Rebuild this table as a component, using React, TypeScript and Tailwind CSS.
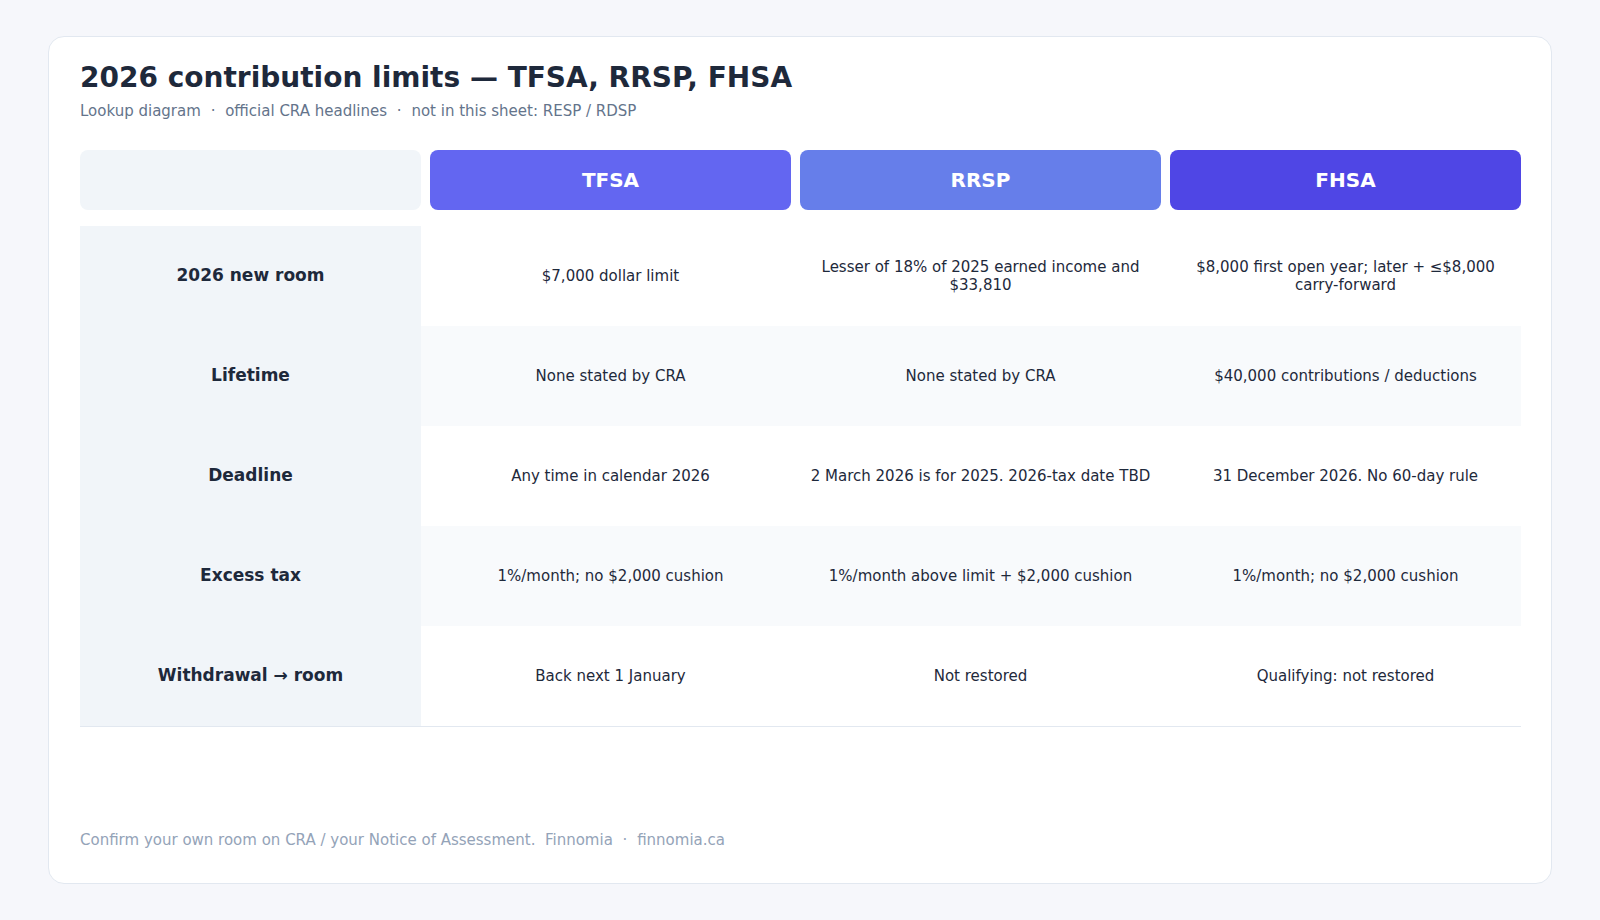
import React from "react";

const rows: { label: string; cells: string[] }[] = [
  {
    label: "2026 new room",
    cells: [
      "$7,000 dollar limit",
      "Lesser of 18% of 2025 earned income and $33,810",
      "$8,000 first open year; later + ≤$8,000 carry-forward",
    ],
  },
  {
    label: "Lifetime",
    cells: ["None stated by CRA", "None stated by CRA", "$40,000 contributions / deductions"],
  },
  {
    label: "Deadline",
    cells: [
      "Any time in calendar 2026",
      "2 March 2026 is for 2025. 2026-tax date TBD",
      "31 December 2026. No 60-day rule",
    ],
  },
  {
    label: "Excess tax",
    cells: [
      "1%/month; no $2,000 cushion",
      "1%/month above limit + $2,000 cushion",
      "1%/month; no $2,000 cushion",
    ],
  },
  {
    label: "Withdrawal → room",
    cells: ["Back next 1 January", "Not restored", "Qualifying: not restored"],
  },
];

const Dot = () => <span className="px-[5px]">·</span>;

export default function App() {
  return (
    <div className="w-[1600px] h-[920px] bg-[#f6f7fb] px-12 py-9 font-['DejaVu_Sans',sans-serif]">
      <div className="h-[848px] w-[1504px] bg-white border border-[#e2e8f0] rounded-2xl pl-[31px] pr-8 pt-[23px] pb-8 flex flex-col">
        <h1 className="text-[28px] leading-[36px] font-bold text-[#1e293b]">
          2026 contribution limits — TFSA, RRSP, FHSA
        </h1>
        <p className="mt-1 text-[15px] leading-[22px] text-[#64748b]">
          Lookup diagram <Dot /> official CRA headlines <Dot /> not in this sheet: RESP / RDSP
        </p>

        <div className="mt-[28px] w-[1441px]">
          <div className="grid grid-cols-[341px_361px_361px_351px] gap-x-[9px] h-[60px]">
            <div className="bg-[#f1f5f9] rounded-lg" />
            <div className="bg-[#6366f1] rounded-lg flex items-center justify-center text-white font-bold text-[20px]">
              TFSA
            </div>
            <div className="bg-[#667eea] rounded-lg flex items-center justify-center text-white font-bold text-[20px]">
              RRSP
            </div>
            <div className="bg-[#4f46e5] rounded-lg flex items-center justify-center text-white font-bold text-[20px]">
              FHSA
            </div>
          </div>

          <div className="mt-4 border-b border-[#e2e8f0]">
            {rows.map((r, i) => (
              <div
                key={r.label}
                className={`grid grid-cols-[341px_361px_361px_351px] gap-x-[9px] h-[100px] ${
                  i % 2 === 1 ? "bg-[#f8fafc]" : "bg-white"
                }`}
              >
                <div className="bg-[#f1f5f9] flex items-center justify-center text-[17px] font-bold text-[#1e293b]">
                  {r.label}
                </div>
                {r.cells.map((c, j) => (
                  <div
                    key={j}
                    className="flex items-center justify-center text-center px-[6px] text-[15px] leading-[18px] text-[#1e293b]"
                  >
                    {c}
                  </div>
                ))}
              </div>
            ))}
          </div>
        </div>

        <p className="mt-auto text-[15px] leading-[22px] text-[#94a3b8]">
          Confirm your own room on CRA / your Notice of Assessment.&nbsp; Finnomia <Dot /> finnomia.ca
        </p>
      </div>
    </div>
  );
}
